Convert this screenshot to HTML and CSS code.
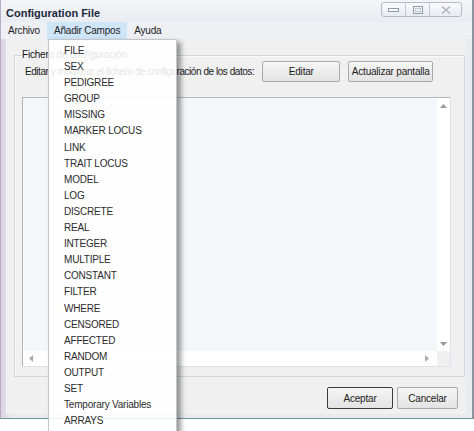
FILE: index.html
```html
<!DOCTYPE html>
<html lang="es">

<head>
    <meta charset="UTF-8">
    <title>Configuration File</title>
    <link rel="stylesheet" href="styles.css">
</head>

<body>
    <div class="window">
        <div class="titlebar">
            <span class="title">Configuration File</span>
            <div class="controls">
                <span class="ctl ctl-min">
                    <svg width="11" height="6" viewBox="0 0 11 6"><rect x="0.5" y="1.5" width="10" height="3" fill="#fff" stroke="#8f9aab"/></svg>
                </span>
                <span class="ctl ctl-max">
                    <svg width="10" height="8" viewBox="0 0 10 8"><rect x="0.5" y="0.5" width="9" height="7" fill="none" stroke="#8f9aab"/><rect x="2.5" y="2.5" width="5" height="3" fill="none" stroke="#c4cad4"/></svg>
                </span>
                <span class="ctl ctl-close">
                    <svg width="10" height="8" viewBox="0 0 10 8"><path d="M1 0.5 L9 7.5 M9 0.5 L1 7.5" stroke="#aab2bf" stroke-width="1.4"/></svg>
                </span>
            </div>
        </div>

        <div class="menubar">
            <span class="menu-item">Archivo</span>
            <span class="menu-item open">Añadir Campos</span>
            <span class="menu-item">Ayuda</span>
        </div>

        <div class="frame">
            <div class="client">
                <fieldset class="group">
                    <legend>Fichero de configuración</legend>
                    <div class="edit-row">
                        <span class="edit-label">Editar y modificar el fichero de configuración de los datos:</span>
                        <button class="btn btn-edit">Editar</button>
                        <button class="btn btn-refresh">Actualizar pantalla</button>
                    </div>
                    <div class="textbox">
                        <div class="text-content"></div>
                        <div class="vscroll">
                            <svg width="7" height="4" viewBox="0 0 7 4"><path d="M0 4 L3.5 0 L7 4 Z" fill="#999"/></svg>
                            <svg width="7" height="4" viewBox="0 0 7 4"><path d="M0 0 L3.5 4 L7 0 Z" fill="#999"/></svg>
                        </div>
                        <div class="hscroll">
                            <svg width="4" height="7" viewBox="0 0 4 7"><path d="M4 0 L0 3.5 L4 7 Z" fill="#aaa"/></svg>
                            <svg width="4" height="7" viewBox="0 0 4 7"><path d="M0 0 L4 3.5 L0 7 Z" fill="#aaa"/></svg>
                        </div>
                        <div class="corner"></div>
                    </div>
                </fieldset>
                <div class="actions">
                    <button class="btn btn-ok">Aceptar</button>
                    <button class="btn btn-cancel">Cancelar</button>
                </div>
            </div>
        </div>
    </div>

    <!-- open "Añadir Campos" menu -->
    <ul class="dropdown">
        <li>FILE</li>
        <li>SEX</li>
        <li>PEDIGREE</li>
        <li>GROUP</li>
        <li>MISSING</li>
        <li>MARKER LOCUS</li>
        <li>LINK</li>
        <li>TRAIT LOCUS</li>
        <li>MODEL</li>
        <li>LOG</li>
        <li>DISCRETE</li>
        <li>REAL</li>
        <li>INTEGER</li>
        <li>MULTIPLE</li>
        <li>CONSTANT</li>
        <li>FILTER</li>
        <li>WHERE</li>
        <li>CENSORED</li>
        <li>AFFECTED</li>
        <li>RANDOM</li>
        <li>OUTPUT</li>
        <li>SET</li>
        <li>Temporary Variables</li>
        <li>ARRAYS</li>
    </ul>
</body>

</html>
```

FILE: styles.css
```css
* {
    margin: 0;
    padding: 0;
    box-sizing: border-box;
}

body {
    position: relative;
    width: 474px;
    height: 431px;
    overflow: hidden;
    background-color: #fff;
    font-family: "Liberation Sans", Arial, sans-serif;
    font-size: 10px;
    letter-spacing: -0.2px;
    color: #1b1b1b;
}

.window {
    height: 419px;
    display: flex;
    flex-direction: column;
    background: linear-gradient(90deg, #dcd3e4, #e9ebf1 12px);
    border-left: 1px solid #b6aec6;
    border-right: 2px solid #8d949d;
    border-bottom: 1px solid #6f9d94;
}

.titlebar {
    height: 22px;
    display: flex;
    align-items: flex-start;
    justify-content: space-between;
    padding: 0 10px 0 5px;
    background: linear-gradient(#f3f5f8, #e9ecf1);
}

.title {
    margin-top: 7px;
    font-size: 11px;
    font-weight: bold;
    letter-spacing: 0;
    color: #1c2940;
}

.controls {
    display: flex;
    margin-top: 2px;
    height: 15px;
    border: 1px solid #b4bcc8;
    border-radius: 3px;
    background: linear-gradient(#f9fafc, #e8ecf1);
}

.ctl {
    display: flex;
    align-items: center;
    justify-content: center;
    border-left: 1px solid #c3cad4;
}

.ctl-min {
    width: 23px;
    border-left: none;
}

.ctl-max {
    width: 24px;
}

.ctl-close {
    width: 32px;
}

.menubar {
    height: 17px;
    display: flex;
    background-color: #eef0f3;
}

.menu-item {
    padding: 0 7px;
    line-height: 18px;
    color: #222;
}

.menu-item.open {
    background-color: #cfe5f8;
}

.frame {
    flex: 1;
    padding: 0 6px 4px 5px;
}

.client {
    height: 100%;
    background-color: #f0f0f0;
    overflow: hidden;
}

.group {
    margin: 10px 4px 0 8px;
    padding: 0 13px 9px 7px;
    border: 1px solid #d2d7dc;
    box-shadow: inset 1px 1px #fafafa;
}

.group legend {
    line-height: 12px;
    color: #111;
}

.edit-row {
    height: 21px;
    display: flex;
    align-items: center;
    gap: 8px;
    margin-right: 18px;
}

.edit-label {
    margin-left: 3px;
    white-space: nowrap;
    letter-spacing: -0.45px;
}

.btn {
    height: 21px;
    flex-shrink: 0;
    border: 1px solid #a9a9a9;
    border-radius: 2px;
    background: linear-gradient(#f6f6f6, #e3e3e3);
    font: inherit;
    letter-spacing: -0.2px;
    color: #1b1b1b;
}

.btn-edit {
    width: 78px;
    margin-left: auto;
}

.btn-refresh {
    width: 85px;
}

.textbox {
    margin-top: 15px;
    height: 270px;
    display: grid;
    grid-template-columns: 1fr 13px;
    grid-template-rows: 1fr 15px;
    border: 1px solid #b4b8bd;
    border-right-color: #dfe2e6;
    border-bottom-color: #dfe2e6;
}

.text-content {
    background-color: #f4f6fa;
}

.vscroll {
    display: flex;
    flex-direction: column;
    align-items: center;
    justify-content: space-between;
    padding: 6px 0 5px;
    background-color: #fff;
}

.hscroll {
    display: flex;
    align-items: center;
    justify-content: space-between;
    padding: 0 8px 0 6px;
    background-color: #fff;
}

.corner {
    background-color: #f0f0f0;
}

.actions {
    display: flex;
    justify-content: flex-end;
    gap: 4px;
    margin: 10px 8px 0 0;
}

.btn-ok {
    width: 66px;
    height: 22px;
    border-color: #3a3a3a;
}

.btn-cancel {
    width: 61px;
    height: 22px;
}

.dropdown {
    position: absolute;
    left: 48px;
    top: 39px;
    width: 129px;
    height: 400px;
    padding-top: 3px;
    list-style: none;
    background-color: rgba(255, 255, 255, 0.88);
    border: 1px solid #c3c7cc;
    box-shadow: 4px 3px 5px rgba(0, 0, 0, 0.4);
}

.dropdown li {
    height: 16.1px;
    line-height: 16px;
    padding-left: 15px;
    color: #2b2b2b;
}
```
